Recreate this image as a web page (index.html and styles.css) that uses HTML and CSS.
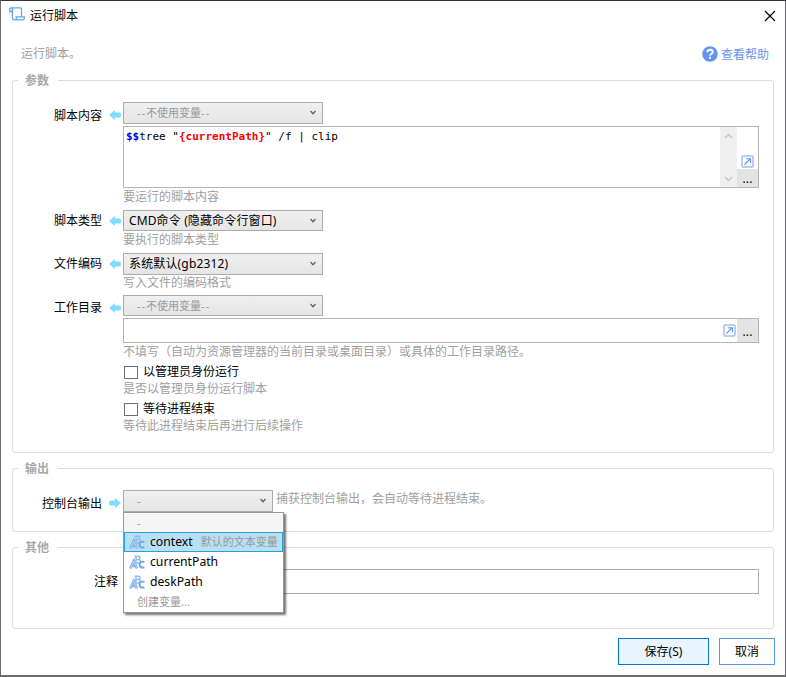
FILE: index.html
```html
<!DOCTYPE html>
<html lang="zh-CN">
<head>
<meta charset="utf-8">
<title>运行脚本</title>
<link rel="stylesheet" href="styles.css">
</head>
<body>
<svg class="defs" width="0" height="0">
  <symbol id="arrow-left" viewBox="0 0 12 10"><path d="M0 5 6 0v2.500h5q1 0 1 2.500t-1 2.500H6V10z" fill="#7fdcff"/></symbol>
  <symbol id="arrow-right" viewBox="0 0 12 10"><path d="M12 5 6 0v2.500H1q-1 0-1 2.500t1 2.500h5V10z" fill="#7fdcff"/></symbol>
  <symbol id="chevron" viewBox="0 0 8 6"><path d="M1.500 1 4 3.700 6.500 1" fill="none" stroke="#606060" stroke-width="1.300"/></symbol>
  <symbol id="expand" viewBox="0 0 13 13"><rect x="1" y="1" width="11" height="11" rx="1" fill="#fff" stroke="#a0bdf4" stroke-width="1.500"/><path d="M3.300 9.700 9 4M5 3.700h4.500v4.500" fill="none" stroke="#6495ed" stroke-width="1.100"/></symbol>
  <symbol id="abc" viewBox="0 0 16 15"><g fill="none"><path d="M1.200 13.500 4.800 6l3.200 7.500M3 11h4" stroke="#7eb4e8" stroke-width="2.600"/><path d="M5.500 1.200h3.500q2 0 2 1.600t-2 1.700q2.400 0 2.400 1.900T9 8H7V1.200M7 4.500h2" stroke="#8fbdea" stroke-width="1.400"/><path d="M15.400 7q-4.800-1.400-4.800 2.500t4.800 2.900" stroke="#70a8df" stroke-width="2"/><path d="M1.500 13.300 4.800 6.300l3 7" stroke="#c8e2fa" stroke-width=".7"/></g></symbol>
</svg>
<div class="window">
  <header class="titlebar">
    <svg class="scroll" width="17" height="15" viewBox="0 0 17 15"><path d="M3.500 4.500H.8V2q0-1.200 1.200-1.200h9.300q1.200 0 1.200 1.200v7.700M2 .8q1.500 0 1.500 1.500v8.900q0 1.600 1.600 1.600h8.600M7.200 9.800h8.100v1.400q0 1.600-1.600 1.600h-5q-1.500 0-1.500-1.600z" fill="none" stroke="#62a5e8" stroke-width="1.300"/></svg>
    <span class="title">运行脚本</span>
    <svg class="close" width="12" height="12" viewBox="0 0 12 12"><path d="m1 1 10 10M11 1 1 11" stroke="#000" stroke-width="1.200"/></svg>
  </header>
  <div class="intro">
    <span>运行脚本。</span>
    <a class="help"><svg width="16" height="16" viewBox="0 0 16 16"><circle cx="8" cy="8" r="7.800" fill="#6495ed"/><path d="M5.300 6.200q.2-2.400 2.800-2.400 2.600 0 2.600 2.100 0 1.200-1.300 1.900Q8 8.500 8 9.600" fill="none" stroke="#fff" stroke-width="1.900"/><rect x="7" y="10.800" width="2" height="2" fill="#fff"/></svg><span>查看帮助</span></a>
  </div>

  <section class="group params">
    <h2>参数</h2>
    <div class="row script">
      <label>脚本内容</label><svg class="arrow"><use href="#arrow-left"/></svg>
      <div class="field">
        <div class="combo muted"><span><s>--</s>不使用变量<s>--</s></span><svg class="chev"><use href="#chevron"/></svg></div>
        <div class="editor">
          <code><b class="blue">$$</b>tree "<b class="red">{currentPath}</b>" /f | clip</code>
          <div class="scrollbar">
            <svg width="9" height="6" viewBox="0 0 9 6"><path d="M1 5l3.500-3.500L8 5" fill="none" stroke="#c6c6c6" stroke-width="1.500"/></svg>
            <svg width="9" height="6" viewBox="0 0 9 6"><path d="M1 1l3.500 3.500L8 1" fill="none" stroke="#c6c6c6" stroke-width="1.500"/></svg>
          </div>
          <div class="tools"><svg class="expand"><use href="#expand"/></svg><span class="more">...</span></div>
        </div>
        <p class="hint">要运行的脚本内容</p>
      </div>
    </div>
    <div class="row type">
      <label>脚本类型</label><svg class="arrow"><use href="#arrow-left"/></svg>
      <div class="field">
        <div class="combo"><span class="type-text">CMD命令 (隐藏命令行窗口)</span><svg class="chev"><use href="#chevron"/></svg></div>
        <p class="hint">要执行的脚本类型</p>
      </div>
    </div>
    <div class="row encoding">
      <label>文件编码</label><svg class="arrow"><use href="#arrow-left"/></svg>
      <div class="field">
        <div class="combo"><span class="enc-text">系统默认(gb2312)</span><svg class="chev"><use href="#chevron"/></svg></div>
        <p class="hint">写入文件的编码格式</p>
      </div>
    </div>
    <div class="row workdir">
      <label>工作目录</label><svg class="arrow"><use href="#arrow-left"/></svg>
      <div class="field">
        <div class="combo muted"><span><s>--</s>不使用变量<s>--</s></span><svg class="chev"><use href="#chevron"/></svg></div>
        <div class="path"><svg class="expand"><use href="#expand"/></svg><span class="more">...</span></div>
        <p class="hint">不填写（自动为资源管理器的当前目录或桌面目录）或具体的工作目录路径。</p>
        <div class="check"><i></i><span>以管理员身份运行</span></div>
        <p class="hint">是否以管理员身份运行脚本</p>
        <div class="check second"><i></i><span>等待进程结束</span></div>
        <p class="hint">等待此进程结束后再进行后续操作</p>
      </div>
    </div>
  </section>

  <section class="group output">
    <h2>输出</h2>
    <div class="row">
      <label>控制台输出</label><svg class="arrow"><use href="#arrow-right"/></svg>
      <div class="field inline">
        <div class="combo muted small"><s>-</s><svg class="chev"><use href="#chevron"/></svg>
          <ul class="menu">
            <li class="none"><s>-</s></li>
            <li class="active"><svg><use href="#abc"/></svg><span>context</span><em>默认的文本变量</em></li>
            <li><svg><use href="#abc"/></svg><span>currentPath</span></li>
            <li><svg><use href="#abc"/></svg><span>deskPath</span></li>
            <li class="create">创建变量...</li>
          </ul>
        </div>
        <p class="hint">捕获控制台输出，会自动等待进程结束。</p>
      </div>
    </div>
  </section>

  <section class="group other">
    <h2>其他</h2>
    <div class="row">
      <label>注释</label>
      <div class="field"><div class="note"></div></div>
    </div>
  </section>

  <footer><button class="save">保存(S)</button><button class="cancel">取消</button></footer>
</div>
</body>
</html>
```
FILE: styles.css
```css
* { box-sizing: border-box; }
body {
  margin: 0;
  width: 786px;
  height: 677px;
  overflow: hidden;
  background: #fff;
  font: 12px/16px "Noto Sans", "Noto Sans CJK SC", sans-serif;
  color: #000;
}
.defs { position: absolute; }
svg { display: block; flex: none; }
p, h2, ul { margin: 0; padding: 0; }
.window {
  display: flex;
  flex-direction: column;
  height: 677px;
  border: 1px solid #6b6b6e;
  border-top-color: #333238;
  border-bottom-width: 2px;
}
.titlebar { display: flex; align-items: center; height: 29px; padding: 0 9px 0 8px; }
.scroll { margin-top: -3px; }
.title { margin-left: 4px; flex: 1; }
.intro {
  display: flex;
  justify-content: space-between;
  align-items: center;
  height: 48px;
  padding: 0 16px 0 20px;
  color: #a0a0a0;
}
.help { display: flex; align-items: center; gap: 3px; color: #6495ed; }
.help span { padding-top: 2px; }

.group {
  flex: none;
  margin: 0 11px;
  border: 1px solid #d5dfe5;
  border-radius: 3px;
}
.group h2 {
  width: 40px;
  height: 16px;
  margin: -9px 0 0 5px;
  padding-left: 7px;
  background: #fff;
  color: #a8a8a8;
  font-size: 12px;
  line-height: 17px;
  font-weight: 700;
}
.params { height: 373px; margin-top: 2px; }
.output { height: 64px; margin-top: 15px; }
.other { height: 82px; margin-top: 15px; }

.row { display: flex; align-items: flex-start; }
.row label { width: 89px; text-align: right; padding-top: 6px; }
.arrow { width: 12px; height: 10px; margin: 8px 2px 0 7px; }
.field { width: 636px; }
.script { height: 122px; padding-top: 14px; }
.type { height: 43px; }
.encoding { height: 42px; }
.type label, .encoding label { padding-top: 3px; }
.workdir label { padding-top: 5px; }
.type .arrow, .encoding .arrow { margin-top: 6px; }

.combo {
  position: relative;
  display: flex;
  align-items: center;
  justify-content: space-between;
  width: 200px;
  height: 22px;
  padding: 0 5px;
  border: 1px solid #acacac;
  background: linear-gradient(#f0f0f0, #e5e5e5);
  white-space: nowrap;
}
.chev { width: 8px; height: 6px; }
.muted { padding-left: 13px; color: #999; font-size: 11px; }
s { text-decoration: none; letter-spacing: 1px; }
.type-text { letter-spacing: .13px; }
.enc-text { letter-spacing: .15px; }
.hint { height: 16px; line-height: 18px; color: #a0a0a0; white-space: nowrap; }
.type .combo { height: 21px; }
.encoding .hint { margin-top: -1px; }

.editor { display: flex; height: 62px; margin-top: 2px; border: 1px solid #b5b5b5; }
.editor code {
  flex: 1;
  padding: 2px 2px;
  font: 11px/16px "DejaVu Sans Mono", monospace;
  white-space: pre;
}
.blue { color: #00f; }
.red { color: #f00; }
.scrollbar {
  display: flex;
  flex-direction: column;
  justify-content: space-between;
  align-items: center;
  width: 17px;
  padding: 6px 0 5px;
  background: #f0f0f0;
}
.tools { display: flex; flex-direction: column; justify-content: flex-end; align-items: center; width: 21px; }
.expand { width: 13px; height: 13px; }
.tools .expand { margin-bottom: 1px; }
.more {
  width: 21px;
  height: 18px;
  background: #e3e3e3;
  text-align: center;
  line-height: 20px;
  letter-spacing: .2px;
}
.workdir .combo { height: 21px; }
.path {
  display: flex;
  justify-content: flex-end;
  align-items: center;
  gap: 1px;
  height: 25px;
  margin-top: 2px;
  border: 1px solid #b5b5b5;
}
.path .more { height: 23px; line-height: 25px; }
.check { display: flex; align-items: center; height: 16px; margin-top: 5px; gap: 5px; }
.check span { line-height: 18px; }
.check i { width: 14px; height: 13px; border: 1px solid #707070; margin-left: 1px; }

.output .row { padding-top: 14px; }
.inline { display: flex; }
.inline .hint { margin: 0 0 0 3px; }
.combo.small { width: 150px; }
.menu {
  position: absolute;
  z-index: 2;
  left: -1px;
  top: 21px;
  width: 161px;
  height: 101px;
  padding-top: 1px;
  border: 1px solid #999;
  background: #fff;
  box-shadow: 2px 2px 2px rgba(0, 0, 0, .55);
  list-style: none;
  color: #000;
  font-size: 12.2px;
}
.menu li { display: flex; align-items: center; height: 20px; padding-left: 5px; }
.menu li svg { width: 16px; height: 15px; margin-right: 5px; }
.menu .none { height: 18px; padding-left: 13px; background: #f5f5f5; color: #999; font-size: 11px; }
.menu .active { padding-left: 4px; border: 1px solid #26a0da; background: #b8dff2; }
.menu em { margin-left: 8px; color: #999; font-size: 11px; font-style: normal; }
.menu .create { padding-left: 13px; height: 19px; color: #999; font-size: 11px; }

.other .row { padding-top: 14px; }
.other label { width: 105px; padding-top: 5px; }
.other .field { margin-left: 5px; }
.note { height: 25px; border: 1px solid #abadb3; }

footer { display: flex; justify-content: flex-end; gap: 10px; padding: 9px 10px 0 0; }
button {
  height: 27px;
  padding: 0;
  border: 1px solid #559cdb;
  background: #fff;
  color: #000;
  font: inherit;
}
.save { width: 91px; border-color: #0078d7; background: #e8f5ff; }
.cancel { width: 56px; }
```
